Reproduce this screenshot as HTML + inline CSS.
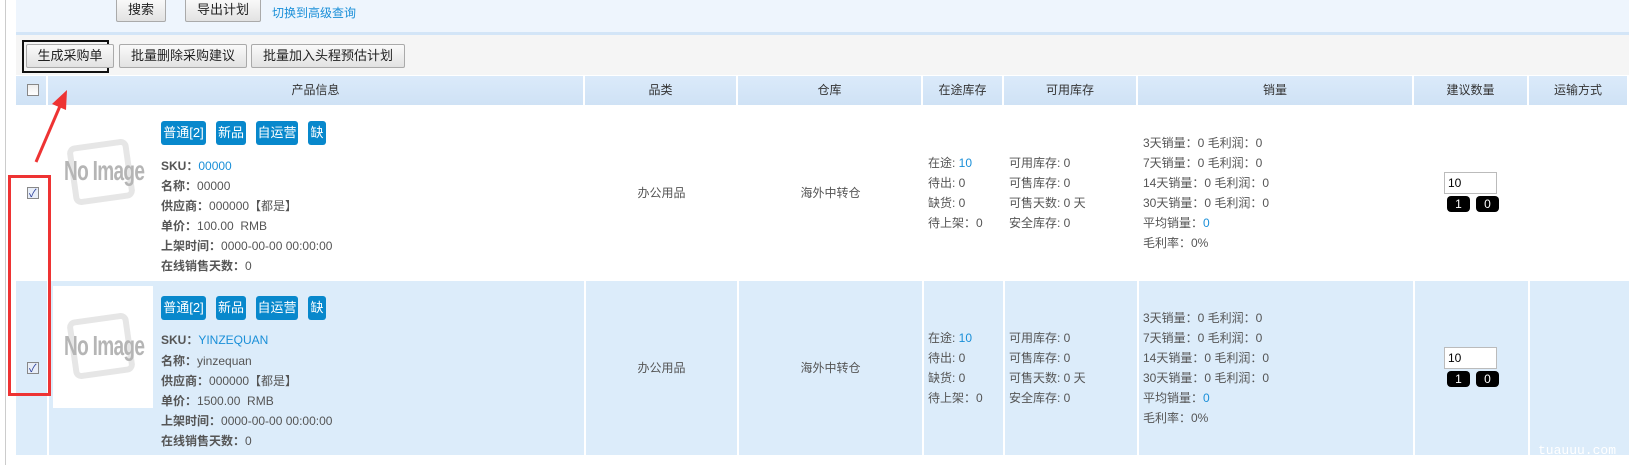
<!DOCTYPE html>
<html><head><meta charset="utf-8"><style>
*{margin:0;padding:0;box-sizing:border-box}
body{width:1629px;height:465px;position:relative;background:#fff;font-family:"Liberation Sans","Noto Sans CJK SC",sans-serif;font-size:12px;color:#555;overflow:hidden}
.a{position:absolute;white-space:nowrap}
.btn{position:absolute;height:24px;border:1px solid #aaa;background:linear-gradient(#fafafa,#e2e2e2);color:#222;font-size:13px;text-align:center;line-height:22px;border-radius:2px}
.hd{position:absolute;top:76px;height:29px;line-height:29px;text-align:center;color:#333;font-size:12px;border-right:2px solid #fff}
.tag{position:absolute;height:24px;line-height:24px;background:#0888cc;color:#fff;font-size:13px;border-radius:3px;text-align:center}
.vl{position:absolute;width:2px;background:#fff}
.cb{position:absolute;width:12px;height:12px;border:1px solid #888;background:linear-gradient(#eee,#fff)}
.ln{position:absolute;white-space:nowrap;line-height:20px}
b{color:#555}
.bl{color:#1a8fd8}
.num{position:absolute;width:23px;height:16px;background:#000;color:#fff;border-radius:4px;text-align:center;line-height:16px;font-size:12px}
.inp{position:absolute;width:53px;height:22px;border:1px solid #bbb;background:#fff;color:#000;font-size:12px;line-height:20px;padding-left:3px}
.noimg{position:absolute;font-family:"Liberation Sans",sans-serif;font-weight:bold;font-size:28px;color:#b5b5b5;letter-spacing:-1px;transform:scaleX(0.68);transform-origin:left}
.w{position:absolute;width:62px;height:60px;border:6px solid #e6e6e6;border-radius:8px;transform:rotate(-8deg)}
</style></head><body>
<div class="a" style="left:5px;top:0;width:1px;height:465px;background:#ccc"></div>
<div class="a" style="left:16px;top:0;width:1613px;height:32px;background:#eef5fd"></div>
<div class="a" style="left:16px;top:32px;width:1613px;height:3px;background:#d3e5f7"></div>
<div class="a" style="left:16px;top:35px;width:1613px;height:40px;background:#f5f5f5"></div>
<div class="btn" style="left:116px;top:-2px;width:50px">搜索</div>
<div class="btn" style="left:185px;top:-2px;width:76px">导出计划</div>
<div class="a" style="left:272px;top:4px;color:#1a8fd8;font-size:12px">切换到高级查询</div>
<div class="a" style="left:22px;top:40px;width:87px;height:33px;border:2px solid #111"></div>
<div class="btn" style="left:26px;top:44px;width:88px">生成采购单</div>
<div class="btn" style="left:119px;top:44px;width:128px">批量删除采购建议</div>
<div class="btn" style="left:251px;top:44px;width:154px">批量加入头程预估计划</div>
<div class="a" style="left:16px;top:76px;width:1613px;height:29px;background:linear-gradient(#dbeafa,#cfe2f5)"></div>
<div class="hd" style="left:16px;width:32px"></div>
<div class="cb" style="left:27px;top:84px"></div>
<div class="hd" style="left:48px;width:537px">产品信息</div>
<div class="hd" style="left:585px;width:153px">品类</div>
<div class="hd" style="left:738px;width:185px">仓库</div>
<div class="hd" style="left:923px;width:81px">在途库存</div>
<div class="hd" style="left:1004px;width:134px">可用库存</div>
<div class="hd" style="left:1138px;width:276px">销量</div>
<div class="hd" style="left:1414px;width:115px">建议数量</div>
<div class="hd" style="left:1529px;width:100px">运输方式</div>
<div class="a" style="left:16px;top:281px;width:1613px;height:174px;background:#dcecfa"></div>
<div class="vl" style="left:47px;top:281px;height:174px"></div>
<div class="vl" style="left:584px;top:281px;height:174px"></div>
<div class="vl" style="left:737px;top:281px;height:174px"></div>
<div class="vl" style="left:922px;top:281px;height:174px"></div>
<div class="vl" style="left:1003px;top:281px;height:174px"></div>
<div class="vl" style="left:1137px;top:281px;height:174px"></div>
<div class="vl" style="left:1413px;top:281px;height:174px"></div>
<div class="vl" style="left:1528px;top:281px;height:174px"></div>
<div class="a" style="left:53px;top:286px;width:100px;height:122px;background:#fff"></div>
<!-- row1 -->
<div class="cb" style="left:27px;top:187px;background:#e8eef8"><span style="position:absolute;left:1px;top:-3px;font-size:11px;color:#2a3f9a">✓</span></div>
<div class="w" style="left:70px;top:142px"></div>
<div class="noimg" style="left:64px;top:155px">No Image</div>
<div class="tag" style="left:161px;top:121px;width:45px">普通[2]</div>
<div class="tag" style="left:216px;top:121px;width:30px">新品</div>
<div class="tag" style="left:256px;top:121px;width:42px">自运营</div>
<div class="tag" style="left:308px;top:121px;width:18px">缺</div>
<div class="ln" style="left:161px;top:156px"><b>SKU：</b><span class="bl">00000</span></div>
<div class="ln" style="left:161px;top:176px"><b>名称：</b>00000</div>
<div class="ln" style="left:161px;top:196px"><b>供应商：</b>000000【都是】</div>
<div class="ln" style="left:161px;top:216px"><b>单价：</b>100.00&nbsp; RMB</div>
<div class="ln" style="left:161px;top:236px"><b>上架时间：</b>0000-00-00 00:00:00</div>
<div class="ln" style="left:161px;top:256px"><b>在线销售天数：</b>0</div>
<div class="ln" style="left:585px;width:153px;text-align:center;top:183px">办公用品</div>
<div class="ln" style="left:738px;width:185px;text-align:center;top:183px">海外中转仓</div>
<div class="ln" style="left:928px;top:153px">在途: <span class="bl">10</span><br>待出: 0<br>缺货: 0<br>待上架：0</div>
<div class="ln" style="left:1009px;top:153px">可用库存: 0<br>可售库存: 0<br>可售天数: 0 天<br>安全库存: 0</div>
<div class="ln" style="left:1143px;top:133px">3天销量：0 毛利润：0<br>7天销量：0 毛利润：0<br>14天销量：0 毛利润：0<br>30天销量：0 毛利润：0<br>平均销量：<span class="bl">0</span><br>毛利率：0%</div>
<div class="inp" style="left:1444px;top:172px">10</div>
<div class="num" style="left:1447px;top:196px">1</div>
<div class="num" style="left:1476px;top:196px">0</div>
<!-- row2 -->
<div class="cb" style="left:27px;top:362px;background:#e8eef8"><span style="position:absolute;left:1px;top:-3px;font-size:11px;color:#2a3f9a">✓</span></div>
<div class="w" style="left:70px;top:316px"></div>
<div class="noimg" style="left:64px;top:330px">No Image</div>
<div class="tag" style="left:161px;top:296px;width:45px">普通[2]</div>
<div class="tag" style="left:216px;top:296px;width:30px">新品</div>
<div class="tag" style="left:256px;top:296px;width:42px">自运营</div>
<div class="tag" style="left:308px;top:296px;width:18px">缺</div>
<div class="ln" style="left:161px;top:330px"><b>SKU：</b><span class="bl">YINZEQUAN</span></div>
<div class="ln" style="left:161px;top:351px"><b>名称：</b>yinzequan</div>
<div class="ln" style="left:161px;top:371px"><b>供应商：</b>000000【都是】</div>
<div class="ln" style="left:161px;top:391px"><b>单价：</b>1500.00&nbsp; RMB</div>
<div class="ln" style="left:161px;top:411px"><b>上架时间：</b>0000-00-00 00:00:00</div>
<div class="ln" style="left:161px;top:431px"><b>在线销售天数：</b>0</div>
<div class="ln" style="left:585px;width:153px;text-align:center;top:358px">办公用品</div>
<div class="ln" style="left:738px;width:185px;text-align:center;top:358px">海外中转仓</div>
<div class="ln" style="left:928px;top:328px">在途: <span class="bl">10</span><br>待出: 0<br>缺货: 0<br>待上架：0</div>
<div class="ln" style="left:1009px;top:328px">可用库存: 0<br>可售库存: 0<br>可售天数: 0 天<br>安全库存: 0</div>
<div class="ln" style="left:1143px;top:308px">3天销量：0 毛利润：0<br>7天销量：0 毛利润：0<br>14天销量：0 毛利润：0<br>30天销量：0 毛利润：0<br>平均销量：<span class="bl">0</span><br>毛利率：0%</div>
<div class="inp" style="left:1444px;top:347px">10</div>
<div class="num" style="left:1447px;top:371px">1</div>
<div class="num" style="left:1476px;top:371px">0</div>
<div class="a" style="left:1538px;top:443px;color:#fff;font-family:'Liberation Mono',monospace;font-size:13px">tuauuu.com</div>
<div class="a" style="left:8px;top:175px;width:43px;height:221px;border:3px solid #ee3333"></div>
<svg class="a" style="left:0;top:0" width="120" height="200"><line x1="36" y1="162" x2="60" y2="106" stroke="#ee3333" stroke-width="3"/><polygon points="67,90 52,104 66,110" fill="#ee3333"/></svg>
</body></html>
